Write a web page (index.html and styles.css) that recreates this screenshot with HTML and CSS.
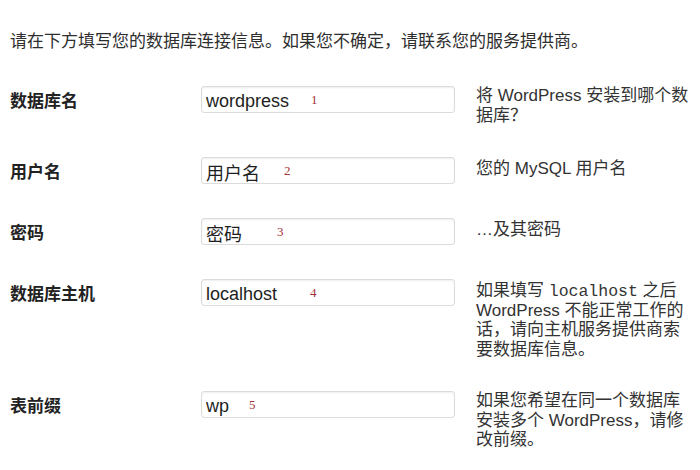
FILE: index.html
```html
<!DOCTYPE html>
<html lang="zh-CN">
<head>
  <meta charset="UTF-8">
  <title>WordPress 安装</title>
  <link rel="stylesheet" href="styles.css">
</head>
<body>

<p class="intro">请在下方填写您的数据库连接信息。如果您不确定，请联系您的服务提供商。</p>

<div class="setup-form">
  <div class="label">数据库名</div>
  <div class="field">
    <input type="text" value="wordpress">
    <span class="mark mark-1">1</span>
  </div>
  <div class="desc">将 WordPress 安装到哪个数据库？</div>

  <div class="label">用户名</div>
  <div class="field">
    <input type="text" value="用户名">
    <span class="mark mark-2">2</span>
  </div>
  <div class="desc">您的 MySQL 用户名</div>

  <div class="label">密码</div>
  <div class="field">
    <input type="text" value="密码">
    <span class="mark mark-3">3</span>
  </div>
  <div class="desc">…及其密码</div>

  <div class="label">数据库主机</div>
  <div class="field">
    <input type="text" value="localhost">
    <span class="mark mark-4">4</span>
  </div>
  <div class="desc">如果填写 <code>localhost</code> 之后 WordPress 不能正常工作的话，请向主机服务提供商索要数据库信息。</div>

  <div class="label">表前缀</div>
  <div class="field">
    <input type="text" value="wp">
    <span class="mark mark-5">5</span>
  </div>
  <div class="desc">如果您希望在同一个数据库安装多个 WordPress，请修改前缀。</div>
</div>

</body>
</html>
```

FILE: styles.css
```css
body {
  font-family: 'Liberation Sans', 'Noto Sans CJK SC', sans-serif;
  font-size: 17px;
  color: #333;
  margin: 0;
  padding: 0 10px;
  background-color: #fff;
}

.intro {
  margin: 0;
  padding-top: 31px;
  line-height: 22px;
  color: #2e2e2e;
}

.setup-form {
  display: grid;
  grid-template-columns: 191px 254px 216px;
  row-gap: 32px;
  align-items: start;
  margin-top: 33px;
}

.label {
  font-weight: 700;
  color: #222;
  line-height: 27px;
  padding-top: 2px;
}

.field {
  position: relative;
}

.field input {
  display: block;
  box-sizing: border-box;
  width: 254px;
  height: 27px;
  margin: 0;
  padding: 3px 4px 0;
  border: 1px solid #dcdcdc;
  border-radius: 3px;
  box-shadow: inset 0 1px 2px rgba(0, 0, 0, 0.07);
  font-family: 'Liberation Sans', 'Noto Sans CJK SC', sans-serif;
  font-size: 18px;
  color: #1e1e1e;
  background-color: #fff;
}

/* red numbers drawn over the inputs */
.mark {
  position: absolute;
  top: 6px;
  font-family: 'Liberation Serif', serif;
  font-size: 13px;
  color: #a3333a;
}

.mark-1 { left: 110px; }
.mark-2 { left: 83px; }
.mark-3 { left: 76px; }
.mark-4 { left: 109px; }
.mark-5 { left: 48px; }

.desc {
  margin-left: 21px;
  width: 216px;
  line-height: 19.5px;
  color: #333;
}

.desc code {
  font-family: 'Liberation Mono', monospace;
  font-size: 16.5px;
  line-height: 1;
}

.setup-form .desc:nth-child(6),
.setup-form .desc:nth-child(9),
.setup-form .desc:nth-child(12) {
  padding-top: 2px;
}
```
